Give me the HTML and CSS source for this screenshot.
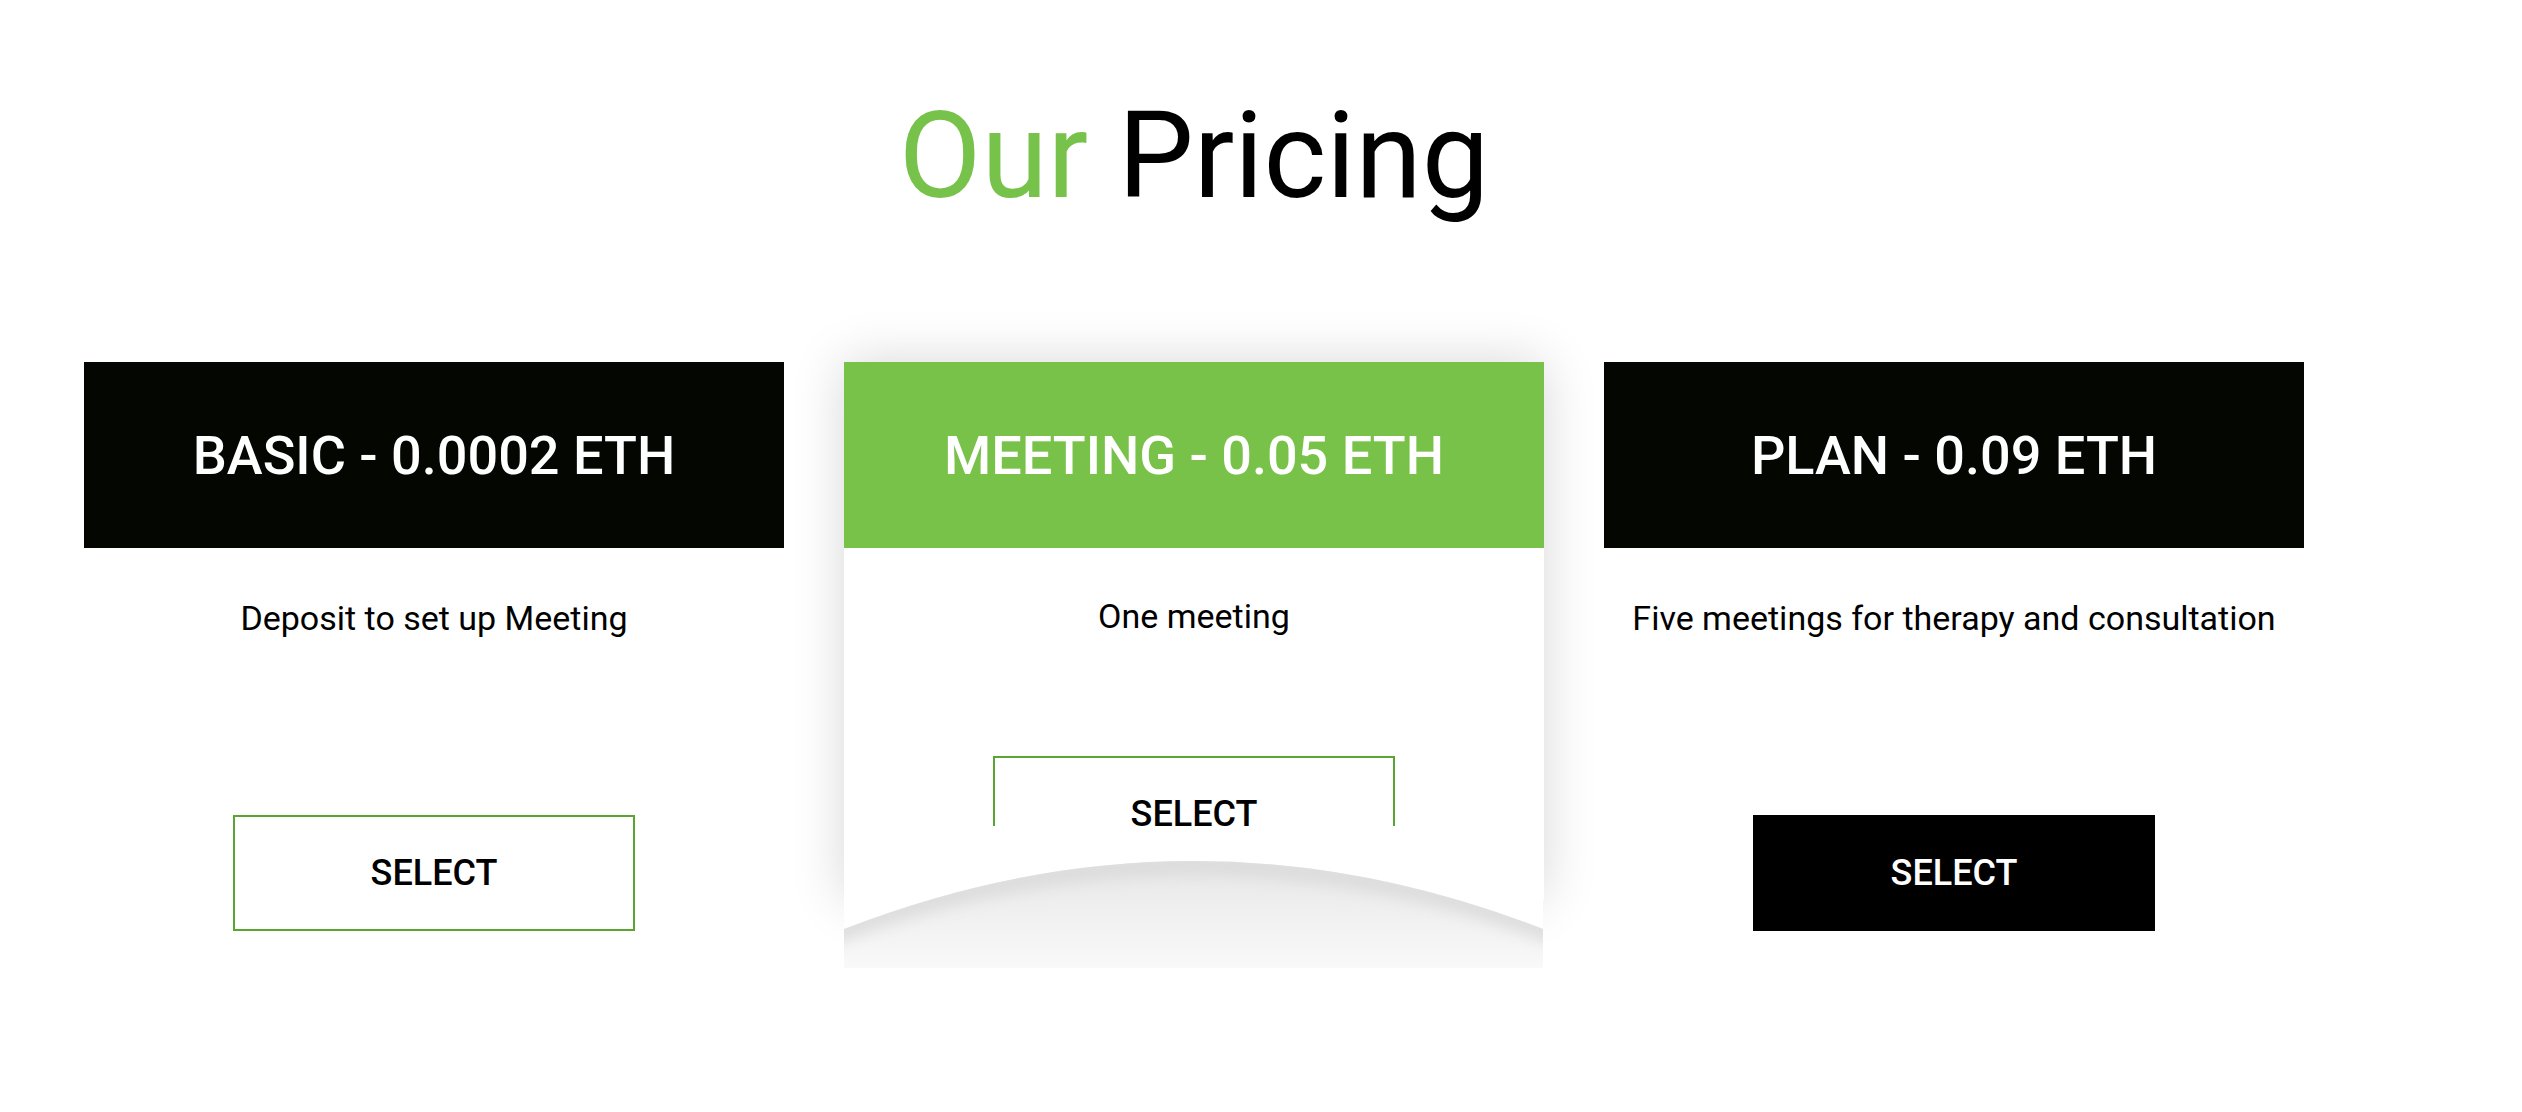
FILE: index.html
```html
<!DOCTYPE html>
<html lang="en">
<head>
<meta charset="utf-8">
<title>Our Pricing</title>
<link rel="stylesheet" href="styles.css">
</head>
<body>
<section class="pricing">
  <h1 class="title"><span class="accent">Our</span> Pricing</h1>
  <div class="cards">
    <div class="card">
      <div class="card-head">BASIC - 0.0002 ETH</div>
      <p class="card-desc">Deposit to set up Meeting</p>
      <a class="btn btn-outline">SELECT</a>
    </div>
    <div class="card card-featured">
      <div class="card-head head-green">MEETING - 0.05 ETH</div>
      <p class="card-desc">One meeting</p>
      <a class="btn btn-outline">SELECT</a>
      <div class="curve">
        <svg width="699" height="142" viewBox="0 0 699 142">
          <defs>
            <clipPath id="below">
              <path d="M0,103 Q349.5,-33 699,103 L699,142 L0,142 Z"/>
            </clipPath>
            <linearGradient id="fade" gradientUnits="userSpaceOnUse" x1="0" y1="35" x2="0" y2="142">
              <stop offset="0" stop-color="#e7e7e7"/>
              <stop offset="0.55" stop-color="#f1f1f1"/>
              <stop offset="1" stop-color="#f9f9f9"/>
            </linearGradient>
            <filter id="soft" x="-10%" y="-100%" width="120%" height="300%">
              <feGaussianBlur stdDeviation="8"/>
            </filter>
          </defs>
          <rect x="0" y="0" width="699" height="142" fill="#ffffff"/>
          <g clip-path="url(#below)">
            <rect x="0" y="0" width="699" height="142" fill="url(#fade)"/>
            <path d="M-20,111 Q349.5,-33 719,111" fill="none" stroke="#dadada" stroke-width="18" filter="url(#soft)"/>
          </g>
        </svg>
      </div>
    </div>
    <div class="card">
      <div class="card-head">PLAN - 0.09 ETH</div>
      <p class="card-desc">Five meetings for therapy and consultation</p>
      <a class="btn btn-dark">SELECT</a>
    </div>
  </div>
</section>
</body>
</html>
```
FILE: styles.css
```css
* {
  box-sizing: border-box;
}

html, body {
  margin: 0;
  padding: 0;
  background: #ffffff;
}

body {
  font-family: Roboto, "Liberation Sans", Arial, sans-serif;
  color: #000000;
}

.pricing {
  width: 2304px;
  padding-left: 84px;
  padding-bottom: 120px;
}

.title {
  margin: 96px 0 0;
  font-size: 120px;
  font-weight: 400;
  line-height: 120px;
  text-align: center;
  color: #000000;
}

.accent {
  color: #77c24a;
}

.cards {
  display: flex;
  gap: 60px;
  margin-top: 146px;
  align-items: flex-start;
}

.card {
  width: 700px;
  display: flex;
  flex-direction: column;
  align-items: center;
  background: #ffffff;
}

.card-head {
  width: 100%;
  height: 186px;
  display: flex;
  align-items: center;
  justify-content: center;
  background: #040602;
  color: #ffffff;
  font-size: 54px;
  font-weight: 500;
}

.head-green {
  background: #78c24a;
}

.card-desc {
  margin: 50px 0 0;
  font-size: 34px;
  line-height: 40px;
  text-align: center;
}

.btn {
  width: 402px;
  height: 116px;
  margin-top: 177px;
  display: flex;
  align-items: center;
  justify-content: center;
  font-size: 36px;
  font-weight: 500;
  cursor: pointer;
}

.btn-outline {
  border: 2px solid #5aa431;
  color: #000000;
  background: #ffffff;
}

.btn-dark {
  background: #000000;
  color: #ffffff;
}

.card-featured {
  position: relative;
  padding-bottom: 28px;
  box-shadow: 0 0 50px rgba(0, 0, 0, 0.16);
}

.card-featured .card-desc {
  margin-top: 48px;
}

.card-featured .btn {
  margin-top: 120px;
}

.curve {
  position: absolute;
  left: 0;
  top: 464px;
  width: 699px;
  height: 142px;
}

.curve svg {
  display: block;
  width: 699px;
  height: 142px;
}
```
